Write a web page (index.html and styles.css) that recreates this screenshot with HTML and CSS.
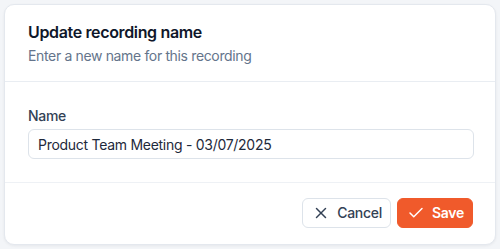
FILE: index.html
```html
<!DOCTYPE html>
<html lang="en">
<head>
<meta charset="utf-8">
<title>Update recording name</title>
<link rel="stylesheet" href="styles.css">
</head>
<body>
<div class="dialog">
  <div class="dialog-header">
    <h2 class="dialog-title">Update recording name</h2>
    <p class="dialog-desc">Enter a new name for this recording</p>
  </div>
  <div class="dialog-body">
    <label class="field-label" for="name">Name</label>
    <input class="field-input" id="name" type="text" value="Product Team Meeting - 03/07/2025">
  </div>
  <div class="dialog-footer">
    <button class="btn btn-outline" type="button">
      <svg class="icon" viewBox="0 0 24 24" width="18" height="18" fill="none" stroke="currentColor" stroke-width="2" stroke-linecap="round" stroke-linejoin="round"><path d="M18 6 6 18"/><path d="m6 6 12 12"/></svg>
      <span>Cancel</span>
    </button>
    <button class="btn btn-primary" type="button">
      <svg class="icon" viewBox="0 0 24 24" width="18" height="18" fill="none" stroke="currentColor" stroke-width="2" stroke-linecap="round" stroke-linejoin="round"><path d="M20 6 9 17l-5-5"/></svg>
      <span>Save</span>
    </button>
  </div>
</div>
</body>
</html>
```
FILE: styles.css
```css
* { box-sizing: border-box; }
html, body { margin: 0; }
body {
  width: 500px;
  height: 249px;
  padding: 4px;
  background: #f3f5f8;
  font-family: Inter, "Noto Sans", sans-serif;
  letter-spacing: -0.02em;
  overflow: hidden;
}
.dialog {
  width: 492px;
  height: 241px;
  background: #ffffff;
  border: 1px solid #e4e8ee;
  border-radius: 10px;
  box-shadow: 0 1px 3px rgba(15, 23, 42, 0.06);
  display: flex;
  flex-direction: column;
}
.dialog-header {
  padding: 15px 23px 15px;
  border-bottom: 1px solid #e9edf2;
}
.dialog-title {
  margin: 0;
  font-size: 16px;
  line-height: 24px;
  font-weight: 600;
  color: #0f172a;
  letter-spacing: -0.022em;
}
.dialog-desc {
  margin: 2px 0 0;
  font-size: 14px;
  line-height: 20px;
  color: #64748b;
  letter-spacing: -0.025em;
}
.dialog-body {
  padding: 24px 23px 23px;
  display: flex;
  flex-direction: column;
  border-bottom: 1px solid #eef1f5;
}
.field-label {
  font-size: 14px;
  line-height: 20px;
  font-weight: 500;
  color: #334155;
  margin-bottom: 3px;
}
.field-input {
  height: 30px;
  width: 446px;
  padding: 0 9px;
  border: 1px solid #dde3ea;
  border-radius: 6px;
  font-family: inherit;
  font-size: 14px;
  letter-spacing: -0.02em;
  color: #1e293b;
  background: #fff;
  outline: none;
}
.dialog-footer {
  padding: 15px 22px 0 0;
  display: flex;
  justify-content: flex-end;
  gap: 6px;
}
.btn {
  height: 30px;
  display: inline-flex;
  align-items: center;
  gap: 7px;
  padding: 0 8px 0 9px;
  border-radius: 6px;
  font-family: inherit;
  font-size: 14px;
  font-weight: 500;
  line-height: 20px;
  letter-spacing: -0.02em;
  cursor: pointer;
}
.btn-outline {
  background: #fff;
  border: 1px solid #dde3ea;
  color: #334155;
}
.btn-primary {
  background: #f05a2b;
  border: 1px solid #f05a2b;
  color: #fff;
  font-weight: 600;
}
.icon { display: block; flex: none; }
```
